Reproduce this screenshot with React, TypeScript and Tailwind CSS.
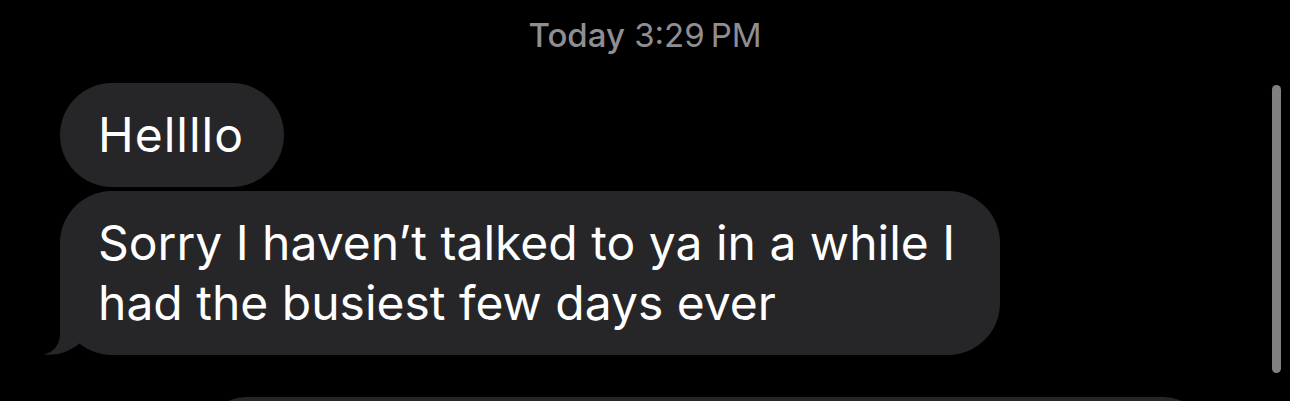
import React from 'react';

const font = { fontFamily: 'Inter, "Noto Sans", sans-serif' };

function Bubble({
  children,
  tail = false,
  pr = 'pr-[38px]',
}: {
  children: React.ReactNode;
  tail?: boolean;
  pr?: string;
}) {
  return (
    <div className="relative self-start">
      {tail && (
        <svg
          className="absolute left-[-16px] bottom-0 w-[60px] h-[50px]"
          viewBox="0 0 60 50"
        >
          <path d="M16 0 L16 28 C16 40 10 47 0 49.5 C14 51 27 46 36 38 L36 0 Z" fill="#262628" />
        </svg>
      )}
      <div className={`relative rounded-[52px] bg-[#262628] pl-[38px] ${pr} py-[22px] text-[48px] leading-[60px] text-white`}>
        {children}
      </div>
    </div>
  );
}

export default function App() {
  return (
    <div className="relative h-[401px] w-full overflow-hidden bg-black" style={font}>
      <div className="pt-[15px] text-center text-[33px] leading-[40px] text-[#8e8e93]">
        <span className="font-medium">Today</span> <span>3:29&#8239;PM</span>
      </div>

      <div className="flex flex-col gap-[4px] pl-[60px] pt-[28px]">
        <Bubble pr="pr-[40px]">
          <span className="tracking-[1px]">Hellllo</span>
        </Bubble>
        <Bubble tail pr="pr-[45px]">
          Sorry I haven’t talked to ya in a while I
          <br />
          had the busiest few days ever
        </Bubble>
      </div>

      <div className="mt-[42px] ml-[206px] h-[80px] w-[998px] rounded-[52px] bg-[#262628]" />

      <div className="absolute right-[9px] top-[85px] h-[288px] w-[9px] rounded-full bg-[#808080]" />
    </div>
  );
}
